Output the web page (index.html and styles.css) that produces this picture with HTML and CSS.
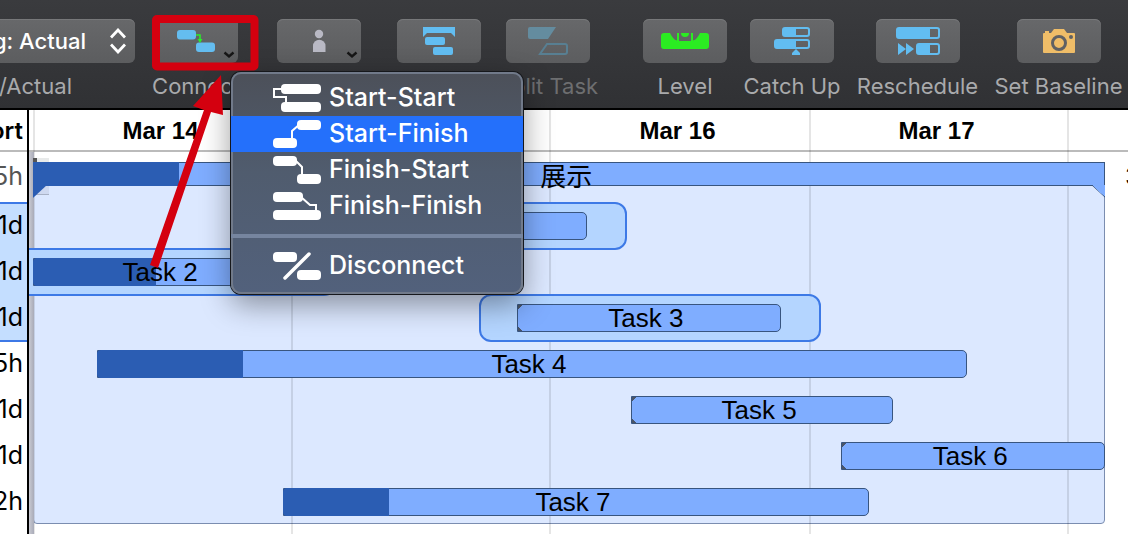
FILE: index.html
```html
<!DOCTYPE html>
<html lang="en">
<head>
<meta charset="utf-8">
<title>Project schedule</title>
<link rel="stylesheet" href="styles.css">
</head>
<body>
<header class="toolbar">
  <div class="tool tool-select">
    <button class="select" id="tracking"><span>Tracking: Actual</span>
      <svg width="16" height="26" viewBox="0 0 16 26"><path d="M1 9.500 8 2l7 7.500M1 16.500 8 24l7-7.500" fill="none" stroke="#fff" stroke-width="2.800"/></svg>
    </button>
    <label for="tracking">Planned/Actual</label>
  </div>
  <div class="tool">
    <button class="btn" id="connect">
      <svg width="84" height="44" viewBox="0 0 84 44"><g fill="#64bdf0"><rect x="23" y="11" width="19" height="9.500" rx="3"/><rect x="42" y="23.500" width="19" height="9.500" rx="3"/></g><path d="M42 16h4v5" fill="none" stroke="#2bea2b" stroke-width="1.600"/><path d="M43.500 20h5L46 24z" fill="#2bea2b"/><path d="m70.500 33.500 4.500 4 4.500-4" fill="none" stroke="#161616" stroke-width="2.400"/></svg>
    </button>
    <label for="connect">Connect</label>
  </div>
  <div class="tool">
    <button class="btn" aria-label="Assign">
      <svg width="84" height="44" viewBox="0 0 84 44"><g fill="#b9b9c4"><circle cx="42" cy="15" r="4.200"/><path d="M36 33v-6a6.200 6.200 0 0 1 12.500 0v6z"/></g><path d="m70.500 33.500 4.500 4 4.500-4" fill="none" stroke="#161616" stroke-width="2.400"/></svg>
    </button>
  </div>
  <div class="tool">
    <button class="btn" aria-label="Group">
      <svg width="84" height="44" viewBox="0 0 84 44"><g fill="#62bdf1"><path d="M26 8h32v10l-4-4H30l-4 4z"/><rect x="28" y="18" width="20" height="8" rx="2"/><rect x="36" y="28" width="20" height="8" rx="2"/></g></svg>
    </button>
  </div>
  <div class="tool disabled">
    <button class="btn" id="split" disabled>
      <svg width="84" height="44" viewBox="0 0 84 44"><path d="M24 8h26l-8 12H24q-2 0-2-2v-8q0-2 2-2z" fill="#648c9f"/><path d="M41 25h18q2 0 2 2v6q0 2-2 2H34z" fill="none" stroke="#587f92" stroke-width="2"/></svg>
    </button>
    <label for="split">Split Task</label>
  </div>
  <div class="spacer"></div>
  <div class="tool">
    <button class="btn" id="level">
      <svg width="84" height="44" viewBox="0 0 84 44"><path d="M21 14h6c2 4 4 7 7 7.500V14h2v8h12v-8h2v7.500c3-.500 5-3.500 7-7.500h6q3 0 3 3v10q0 3-3 3H21q-3 0-3-3V17q0-3 3-3z" fill="#2bec22"/><path d="M38 14h8q0 4-4 4t-4-4z" fill="#2bec22"/></svg>
    </button>
    <label for="level">Level</label>
  </div>
  <div class="tool">
    <button class="btn" id="catch">
      <svg width="84" height="44" viewBox="0 0 84 44"><g fill="#62bdf1"><path fill-rule="evenodd" d="M35 8h22q3 0 3 3v4q0 3-3 3H35q-3 0-3-3v-4q0-3 3-3zM46 10v6h11q1 0 1-1v-4q0-1-1-1z"/><path fill-rule="evenodd" d="M27 20h30q3 0 3 3v4q0 3-3 3H27q-3 0-3-3v-4q0-3 3-3zM46 22v6h11q1 0 1-1v-4q0-1-1-1z"/><path d="m46 30 4 4v2h-8v-2z"/></g></svg>
    </button>
    <label for="catch">Catch Up</label>
  </div>
  <div class="tool">
    <button class="btn" id="resched">
      <svg width="84" height="44" viewBox="0 0 84 44"><g fill="#62bdf1"><path fill-rule="evenodd" d="M23 8h38q3 0 3 3v6q0 3-3 3H23q-3 0-3-3v-6q0-3 3-3zM54 10v8h7q1 0 1-1v-6q0-1-1-1z"/><path fill-rule="evenodd" d="M43 24h18q3 0 3 3v6q0 3-3 3H43q-3 0-3-3v-6q0-3 3-3zM54 26v8h7q1 0 1-1v-6q0-1-1-1z"/><path d="m22 24 8 6-8 6zM30 24l8 6-8 6z"/></g></svg>
    </button>
    <label for="resched">Reschedule</label>
  </div>
  <div class="tool">
    <button class="btn" id="baseline">
      <svg width="84" height="44" viewBox="0 0 84 44"><path fill="#efbd68" d="M27 14h1v-2h4v2h2l3-4h10l3 4h7q1 0 1 1v18q0 1-1 1H27q-1 0-1-1V15q0-1 1-1z"/><circle cx="42" cy="24" r="6.500" fill="none" stroke="#606163" stroke-width="3"/><circle cx="54" cy="18" r="2" fill="#606163"/></svg>
    </button>
    <label for="baseline">Set Baseline</label>
  </div>
</header>

<main class="project">
  <section class="outline">
    <div class="col-head"><span>Effort</span></div>
    <div class="cell first"><span>5h</span></div>
    <div class="picked">
      <div class="cell"><span>1d</span></div>
      <div class="cell"><span>1d</span></div>
      <div class="cell"><span>1d</span></div>
    </div>
    <div class="cell"><span>5h</span></div>
    <div class="cell"><span>1d</span></div>
    <div class="cell"><span>1d</span></div>
    <div class="cell"><span>2h</span></div>
  </section>

  <section class="chart">
    <div class="days">
      <div></div><div class="day">Mar 14</div><div class="day"></div><div class="day">Mar 16</div><div class="day">Mar 17</div><div class="day"></div>
    </div>
    <div class="plot">
      <div class="extent" style="left:.4%;width:97.550%"></div>
      <div class="days lines"><div></div><div class="day"></div><div class="day"></div><div class="day"></div><div class="day"></div><div class="day"></div></div>
      <div class="edge"></div>
      <div class="rows">
        <div class="row summary-row">
          <div class="summary" style="margin-left:.360%;width:97.590%"><div class="handle"></div><div class="done" style="width:13.600%"></div><span>展示</span></div>
          <span class="resource">3</span>
        </div>
        <div class="row"><div class="halo" style="left:25%;width:29.400%"></div><div class="bar" style="margin-left:29%;width:21.800%"></div></div>
        <div class="row"><div class="halo" style="left:-4%;width:31.900%"></div><div class="bar" style="margin-left:.360%;width:23.700%"><div class="done" style="width:47.500%"></div><span>Task 2</span></div></div>
        <div class="row"><div class="halo" style="left:40.950%;width:31.120%"></div><div class="bar" style="margin-left:44.400%;width:24.020%"><span>Task 3</span></div></div>
        <div class="row"><div class="bar" style="margin-left:6.190%;width:79.160%"><div class="done" style="width:16.850%"></div><span>Task 4</span></div></div>
        <div class="row"><div class="bar" style="margin-left:54.780%;width:23.840%"><span>Task 5</span></div></div>
        <div class="row"><div class="bar" style="margin-left:73.890%;width:24.060%"><span>Task 6</span></div></div>
        <div class="row"><div class="bar" style="margin-left:23.110%;width:53.320%"><div class="done" style="width:18.200%"></div><span>Task 7</span></div></div>
      </div>
    </div>
  </section>
</main>

<nav class="menu">
  <button><svg width="48" height="28" viewBox="0 0 48 28"><g fill="#fff"><rect x="8" width="40" height="10" rx="4"/><rect x="8" y="18" width="40" height="10" rx="4"/></g><path d="M9 5H1v8h12v6" fill="none" stroke="#fff" stroke-width="2"/></svg><span>Start-Start</span></button>
  <button class="active"><svg width="48" height="28" viewBox="0 0 48 28"><g fill="#fff"><rect x="24" width="24" height="10" rx="4"/><rect y="18" width="24" height="10" rx="4"/></g><path d="M27 4l-8 7v8" fill="none" stroke="#fff" stroke-width="2"/></svg><span>Start-Finish</span></button>
  <button><svg width="48" height="28" viewBox="0 0 48 28"><g fill="#fff"><rect width="24" height="10" rx="4"/><rect x="24" y="18" width="24" height="10" rx="4"/></g><path d="M22 4l7 7v8" fill="none" stroke="#fff" stroke-width="2"/></svg><span>Finish-Start</span></button>
  <button><svg width="48" height="28" viewBox="0 0 48 28"><g fill="#fff"><rect width="30" height="10" rx="4"/><rect y="18" width="48" height="10" rx="4"/></g><path d="M28 5l9 8h6v6" fill="none" stroke="#fff" stroke-width="2"/></svg><span>Finish-Finish</span></button>
  <hr>
  <button><svg width="48" height="28" viewBox="0 0 48 28"><g fill="#fff"><rect width="24" height="10" rx="4"/><rect x="24" y="18" width="24" height="10" rx="4"/></g><path d="M36 2 12 26" fill="none" stroke="#fff" stroke-width="3.500" stroke-linecap="round"/></svg><span>Disconnect</span></button>
</nav>

<svg class="note" width="260" height="280" viewBox="0 0 260 280"><rect x="156" y="19" width="98.500" height="47.500" rx="1" fill="none" stroke="#d4000f" stroke-width="8"/><path d="M221 75 193 106l11 4-54 155 8 3 53-156 12 3z" fill="#d4000f"/></svg>
</body>
</html>
```
FILE: styles.css
```css
* { box-sizing: border-box; }
body { margin: 0; min-height: 100vh; position: relative; overflow: hidden; background: #fff; color: #000; font-family: Inter, "Liberation Sans", "Noto Sans CJK SC", sans-serif; display: flex; flex-direction: column; }
button { font: inherit; border: 0; padding: 0; margin: 0; }
svg { display: block; flex: none; }

.toolbar { display: grid; grid-template-columns: 143fr 106fr 140fr 100fr 118fr 25fr 106fr 108fr 143fr 139fr; padding: 19px 0 8px; background: linear-gradient(#3a3b3e, #303134); border-bottom: 2px solid #000; }
.tool { display: grid; justify-items: center; align-content: start; grid-template-columns: minmax(0, 1fr); row-gap: 9px; }
.tool label { font-size: 22px; line-height: 28px; color: #a9aaac; white-space: nowrap; }
.tool.disabled label { color: #6d6e70; }
.btn { width: 84px; height: 44px; border-radius: 6px; background: linear-gradient(#67686a, #5c5d5f); box-shadow: inset 0 1px #77787a; }
.tool-select { justify-items: end; padding-right: 8px; }
.tool-select label { padding-right: 63px; }
.select { display: flex; align-items: center; gap: 24px; height: 44px; padding: 0 9px 0 12px; border-radius: 6px; background: linear-gradient(#67686a, #5c5d5f); box-shadow: inset 0 1px #77787a; color: #fff; font-size: 22px; font-weight: 500; white-space: nowrap; }

.project { display: grid; grid-template-columns: 29px minmax(0, 1fr); flex: 1; }
.outline { border-right: 2px solid #000; overflow: hidden; font-size: 25px; }
.outline span { white-space: nowrap; }
.col-head, .cell { display: flex; justify-content: flex-end; align-items: center; padding-right: 4px; height: 46px; }
.col-head { height: 42px; font-size: 24px; font-weight: 600; border-bottom: 2px solid #bbb; }
.cell.first { height: 50px; padding-bottom: 3px; color: #555; }
.picked { padding-bottom: 2px; margin-bottom: -2px; background: #c4deff; box-shadow: inset 0 2px #3d79e6, inset 0 -2px #3d79e6; }

.chart { display: flex; flex-direction: column; overflow: hidden; font-family: "Liberation Sans", "Noto Sans CJK SC", sans-serif; }
.days { display: grid; grid-template-columns: 4fr 258fr 258fr 260fr 258fr 61fr; height: 42px; border-bottom: 2px solid #bbb; font-size: 24px; font-weight: 700; line-height: 42px; text-align: center; }
.day { border-left: 2px solid rgba(0, 0, 0, .1); padding-right: 5px; }
.plot { position: relative; flex: 1; }
.lines { position: absolute; inset: 0; height: auto; border: 0; }
.extent { position: absolute; top: 12px; height: 360px; background: #dce8ff; border: 1px solid #7b8db0; border-radius: 0 0 4px 4px; }
.edge { position: absolute; inset: 0 auto 0 0; width: 5px; background: linear-gradient(90deg, #c9cad2, #a9abb8); }
.rows { position: relative; isolation: isolate; padding-top: 10px; }
.row { position: relative; height: 46px; display: flex; align-items: center; }
.summary-row { height: 41px; align-items: flex-start; }
.bar, .summary { position: relative; flex: none; display: flex; align-items: center; justify-content: center; height: 28px; padding-right: 6px; font-size: 26px; line-height: 28px; background: #7fadff; border: 1px solid #38557f; }
.bar { border-radius: 0 5px 5px 0; background: linear-gradient(135deg, #4a5568 3px, transparent 3px), linear-gradient(45deg, #4a5568 3px, transparent 3px), #7fadff; }
.bar span, .summary span { position: relative; }
.summary { height: 24px; padding-top: 5px; }
.summary::before, .summary::after { content: ""; position: absolute; top: 22px; width: 14px; height: 13px; background: #2b5db3; clip-path: polygon(0 0, 100% 0, 0 100%); left: -1px; }
.summary::after { left: auto; right: -1px; background: linear-gradient(to top right, #38557f 54%, #7fadff 55%); clip-path: polygon(0 0, 100% 0, 100% 100%); }
.handle { position: absolute; z-index: -1; left: -1px; top: -5px; width: 16px; height: 37px; background: linear-gradient(90deg, #555 4px, #e8eaea 4px) 0 0 / 100% 4px no-repeat, #cfd9f0; border-bottom: 1px solid #a9b2c6; }
.done { position: absolute; inset: -1px auto -1px -1px; background: #2b5db3; }
.bar .done { border-radius: 4px 0 0 4px; }
.halo { position: absolute; top: -1px; height: 48px; background: #b4d5ff; border: 2px solid #3d79e6; border-radius: 12px; }
.resource { font-size: 26px; line-height: 28px; margin-left: 20px; }

.menu { position: absolute; left: 231px; top: 72px; width: 292px; padding: 8px 0 10px; border-radius: 10px; overflow: hidden; background: linear-gradient(#4c5059, #505c6e 45%, #52617c); box-shadow: 0 0 0 1px #16181c, 0 10px 30px rgba(0, 0, 0, .4), inset 0 0 0 2px #717a8a; }
.menu button { display: flex; align-items: center; gap: 8px; width: 100%; height: 36px; padding-left: 42px; background: none; color: #fff; font-size: 25px; line-height: 30px; font-weight: 500; }
.menu span { padding-bottom: 2px; }
.menu .active { background: #2470fb; }
.menu hr { height: 4px; margin: 10px 0; border: 0; background: #76859f; }
.note { position: absolute; left: 0; top: 0; pointer-events: none; }
```
